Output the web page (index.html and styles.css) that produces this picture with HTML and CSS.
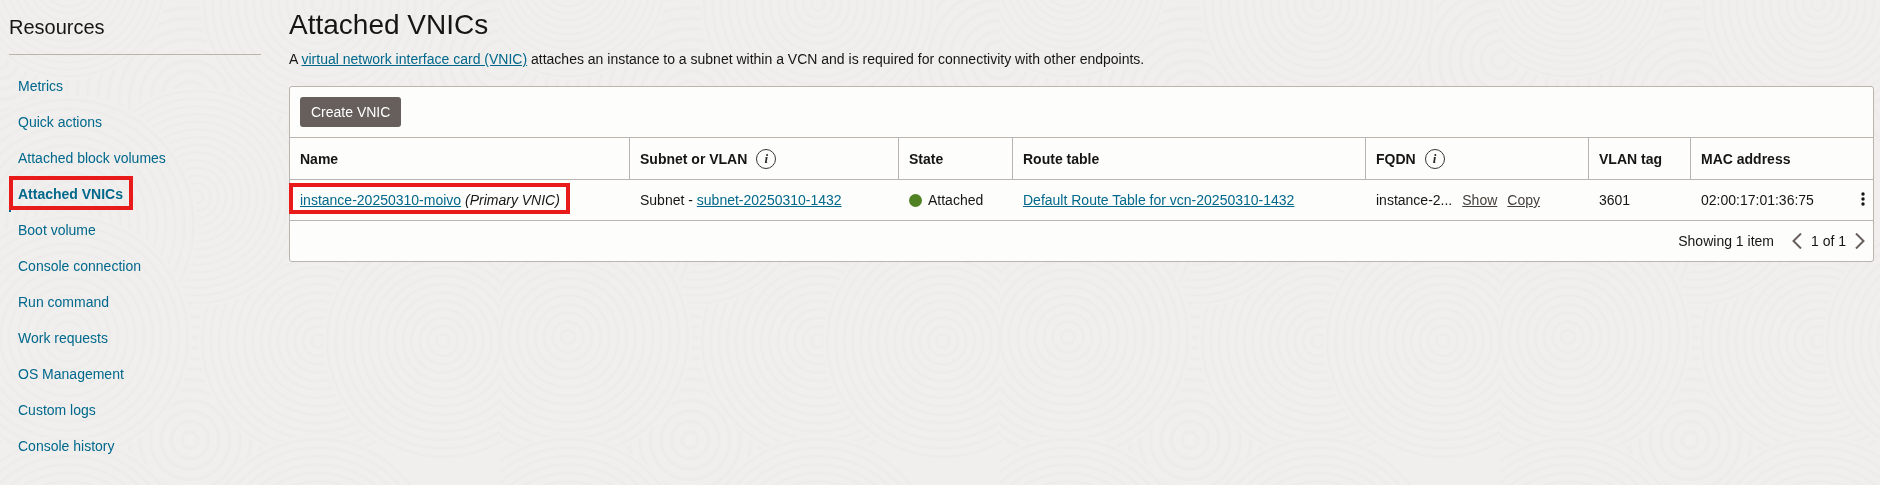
FILE: index.html
```html
<!DOCTYPE html>
<html lang="en">
<head>
    <meta charset="UTF-8">
    <meta name="viewport" content="width=device-width, initial-scale=1.0">
    <title>Attached VNICs</title>
    <link rel="stylesheet" href="styles.css">
</head>
<body>
    <!-- Rippled background texture -->
    <svg class="texture" aria-hidden="true">
        <defs>
            <radialGradient id="ripple" r="0.035" spreadMethod="repeat">
                <stop offset="0" stop-color="#f0efed"/>
                <stop offset="0.5" stop-color="#f0efed"/>
                <stop offset="0.8" stop-color="#ecebe9"/>
                <stop offset="1" stop-color="#f0efed"/>
            </radialGradient>
            <pattern id="waves" width="500" height="500" patternUnits="userSpaceOnUse">
                <g fill="url(#ripple)">
                    <circle cx="0" cy="60" r="150"/>
                    <circle cx="500" cy="60" r="150"/>
                    <circle cx="190" cy="100" r="150"/>
                    <circle cx="190" cy="440" r="150"/>
                    <circle cx="318" cy="341" r="120"/>
                    <circle cx="-57" cy="341" r="120"/>
                    <circle cx="443" cy="341" r="120"/>
                    <circle cx="197" cy="197" r="110"/>
                    <circle cx="68" cy="225" r="130"/>
                    <circle cx="68" cy="337" r="124"/>
                    <circle cx="68" cy="555" r="120"/>
                    <circle cx="318" cy="555" r="120"/>
                    <circle cx="68" cy="-20" r="100"/>
                    <circle cx="318" cy="4" r="118"/>
                </g>
            </pattern>
        </defs>
        <rect width="100%" height="100%" fill="url(#waves)"/>
    </svg>

    <div class="page">
        <aside class="sidebar">
            <h2>Resources</h2>
            <nav>
                <ul>
                    <li><a href="#">Metrics</a></li>
                    <li><a href="#">Quick actions</a></li>
                    <li><a href="#">Attached block volumes</a></li>
                    <li class="active"><a href="#" class="marked" aria-current="page">Attached VNICs</a></li>
                    <li><a href="#">Boot volume</a></li>
                    <li><a href="#">Console connection</a></li>
                    <li><a href="#">Run command</a></li>
                    <li><a href="#">Work requests</a></li>
                    <li><a href="#">OS Management</a></li>
                    <li><a href="#">Custom logs</a></li>
                    <li><a href="#">Console history</a></li>
                </ul>
            </nav>
        </aside>

        <main class="content">
            <h1>Attached VNICs</h1>
            <p class="intro">A <a href="#">virtual network interface card (VNIC)</a> attaches an instance to a subnet within a VCN and is required for connectivity with other endpoints.</p>

            <div class="panel">
                <div class="toolbar">
                    <button type="button" class="create">Create VNIC</button>
                </div>

                <table>
                    <colgroup>
                        <col class="col-name">
                        <col class="col-subnet">
                        <col class="col-state">
                        <col class="col-route">
                        <col class="col-fqdn">
                        <col class="col-vlan">
                        <col class="col-mac">
                        <col class="col-menu">
                    </colgroup>
                    <thead>
                        <tr>
                            <th scope="col">Name</th>
                            <th scope="col"><div class="th-info">Subnet or VLAN <button type="button" class="info" aria-label="About subnet or VLAN">i</button></div></th>
                            <th scope="col">State</th>
                            <th scope="col">Route table</th>
                            <th scope="col"><div class="th-info">FQDN <button type="button" class="info" aria-label="About FQDN">i</button></div></th>
                            <th scope="col">VLAN tag</th>
                            <th scope="col" colspan="2">MAC address</th>
                        </tr>
                    </thead>
                    <tbody>
                        <tr>
                            <td><span class="marked"><a href="#">instance-20250310-moivo</a> <em>(Primary VNIC)</em></span></td>
                            <td>Subnet - <a href="#">subnet-20250310-1432</a></td>
                            <td><div class="state"><span class="dot"></span>Attached</div></td>
                            <td><a href="#">Default Route Table for vcn-20250310-1432</a></td>
                            <td>
                                <div class="fqdn">
                                    <span>instance-2...</span>
                                    <a href="#">Show</a>
                                    <a href="#">Copy</a>
                                </div>
                            </td>
                            <td>3601</td>
                            <td>02:00:17:01:36:75</td>
                            <td class="menu-cell">
                                <button type="button" class="icon-btn" aria-label="Actions">
                                    <svg width="4" height="14" viewBox="0 0 4 14" fill="#161513">
                                        <circle cx="2" cy="2" r="1.7"/>
                                        <circle cx="2" cy="7" r="1.7"/>
                                        <circle cx="2" cy="12" r="1.7"/>
                                    </svg>
                                </button>
                            </td>
                        </tr>
                    </tbody>
                </table>

                <div class="pager">
                    <span class="count">Showing 1 item</span>
                    <button type="button" class="icon-btn" aria-label="Previous page">
                        <svg width="10" height="16" viewBox="0 0 10 16"><path d="M9 0.5L1.5 8L9 15.5"/></svg>
                    </button>
                    <span>1 of 1</span>
                    <button type="button" class="icon-btn" aria-label="Next page">
                        <svg width="10" height="16" viewBox="0 0 10 16"><path d="M1 0.5L8.5 8L1 15.5"/></svg>
                    </button>
                </div>
            </div>
        </main>
    </div>
</body>
</html>
```
FILE: styles.css
```css
:root {
    --text-color: #161513;
    --link-color: #00688c;
    --border-color: #bab4af;
    --panel-color: #fdfdfb;
    --mark-color: #e81a1a;
}

* {
    margin: 0;
    padding: 0;
    box-sizing: border-box;
}

body {
    background-color: #f0efed;
    color: var(--text-color);
    font-family: "Liberation Sans", Arial, sans-serif;
    font-size: 14px;
    line-height: 16px;
}

button {
    font: inherit;
    cursor: pointer;
}

a {
    color: var(--link-color);
}

.texture {
    position: fixed;
    inset: 0;
    width: 100%;
    height: 100%;
    z-index: -1;
}

.page {
    display: flex;
    gap: 28px;
    padding: 8px 6px 20px 9px;
}

/* Sidebar */
.sidebar {
    flex: 0 0 252px;
}

.sidebar h2 {
    font-size: 20px;
    font-weight: 400;
    line-height: 24px;
    padding: 7px 0 15px;
    border-bottom: 1px solid #b9b5a9;
}

.sidebar ul {
    list-style: none;
    margin-top: 13px;
}

.sidebar li {
    display: flex;
    align-items: center;
    height: 36px;
    padding-left: 7px;
    border-left: 2px solid transparent;
}

.sidebar li.active {
    border-left-color: var(--link-color);
    font-weight: 700;
}

.sidebar a {
    text-decoration: none;
}

/* Red highlight box */
.marked {
    position: relative;
}

.marked::after {
    content: "";
    position: absolute;
    inset: -9px -10px -6px -11px;
    border: 4px solid var(--mark-color);
    pointer-events: none;
}

.sidebar .marked::after {
    inset: -10px -10px -8px -9px;
}

/* Content */
.content {
    flex: 1;
    min-width: 0;
}

h1 {
    font-size: 28px;
    font-weight: 400;
    line-height: 34px;
}

.intro {
    margin: 9px 0 19px;
}

.panel {
    background: var(--panel-color);
    border: 1px solid var(--border-color);
    border-radius: 3px;
}

.toolbar {
    padding: 10px;
}

.create {
    display: block;
    height: 30px;
    padding: 0 11px;
    border: 0;
    border-radius: 3px;
    background: #665f5b;
    color: #fff;
}

table {
    width: 100%;
    table-layout: fixed;
    border-collapse: separate;
    border-spacing: 0;
}

.col-name { width: 340px; }
.col-subnet { width: 269px; }
.col-state { width: 114px; }
.col-fqdn { width: 223px; }
.col-vlan { width: 102px; }
.col-mac { width: 150px; }
.col-menu { width: 32px; }

th,
td {
    padding: 0 10px;
    text-align: left;
    vertical-align: middle;
    white-space: nowrap;
    border-bottom: 1px solid var(--border-color);
}

th {
    height: 43px;
    border-top: 1px solid var(--border-color);
    border-right: 1px solid var(--border-color);
}

th:last-child {
    border-right: 0;
}

td {
    height: 41px;
}

.th-info {
    display: flex;
    align-items: center;
    gap: 9px;
}

.info {
    width: 20px;
    height: 20px;
    border: 1px solid #3a3632;
    border-radius: 50%;
    background: none;
    color: #2b2825;
    font: italic 700 13px/16px "Liberation Serif", serif;
    text-align: center;
}

.state {
    display: flex;
    align-items: center;
    gap: 6px;
}

.dot {
    width: 13px;
    height: 13px;
    border-radius: 50%;
    background: #508223;
}

.fqdn {
    display: flex;
    gap: 10px;
}

.fqdn a {
    color: #45403c;
}

.menu-cell {
    padding: 0 8px 0 0;
    text-align: right;
}

.icon-btn {
    border: 0;
    background: none;
    line-height: 0;
}

.pager {
    display: flex;
    align-items: center;
    justify-content: flex-end;
    gap: 9px;
    height: 40px;
    padding-right: 8px;
}

.pager .count {
    margin-right: 9px;
}

.pager path {
    fill: none;
    stroke: #665f5b;
    stroke-width: 2;
}
```
